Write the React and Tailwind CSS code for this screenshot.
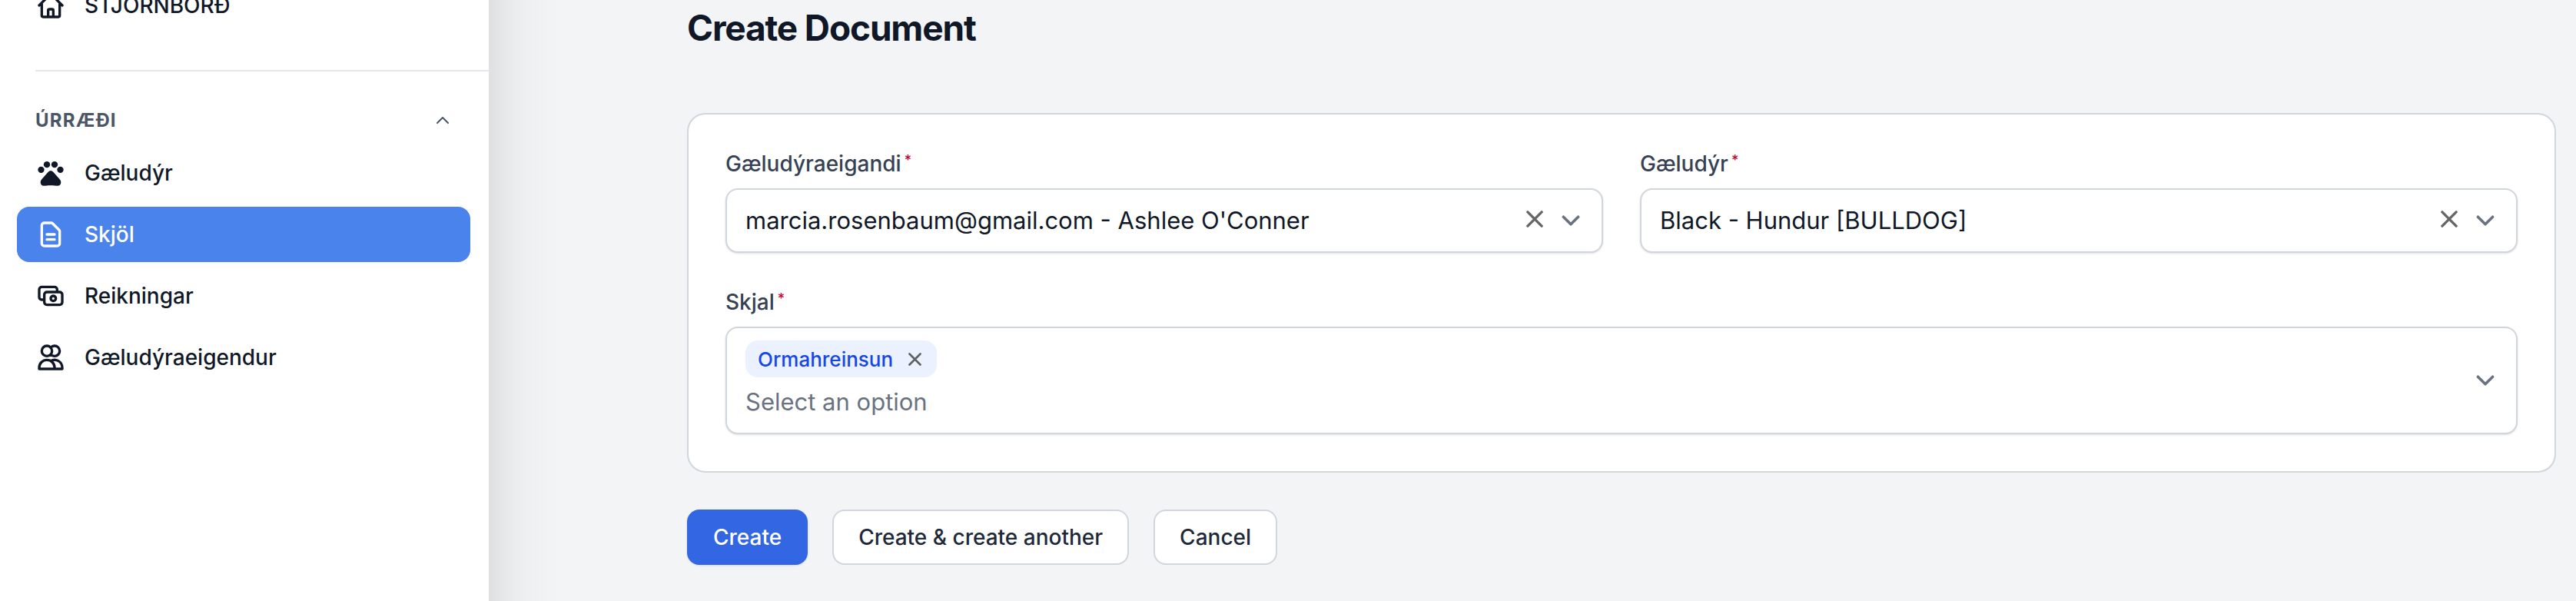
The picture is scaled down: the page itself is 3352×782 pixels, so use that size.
import { useState } from 'react'
import {
  HiOutlineHome,
  HiOutlineDocumentText,
  HiOutlineCash,
  HiOutlineUsers,
  HiOutlineChevronUp
} from 'react-icons/hi'

const PawIcon = ({ className }) => (
  <svg className={className} viewBox="0 0 24 24" fill="currentColor" aria-hidden="true">
    <circle cx="4.5" cy="9.5" r="2.5" />
    <circle cx="9" cy="5.5" r="2.5" />
    <circle cx="15" cy="5.5" r="2.5" />
    <circle cx="19.5" cy="9.5" r="2.5" />
    <path d="M12 10.4c-.9 0-1.5.4-2.1 1l-4.8 5.4C4.4 17.6 4 18.5 4 19.4 4 21 5 22.1 6.6 22.1c1.6 0 3.2-.4 5.4-.4s3.8.4 5.4.4c1.6 0 2.6-1.1 2.6-2.7 0-.9-.4-1.8-1.1-2.6l-4.8-5.4c-.6-.6-1.2-1-2.1-1z" />
  </svg>
)

const CrossIcon = ({ className }) => (
  <svg className={className} viewBox="0 0 22 22" fill="none" stroke="currentColor" strokeWidth="3.4" strokeLinecap="round" aria-hidden="true">
    <path d="M1.9 1.9l18.2 18.2M20.1 1.9L1.9 20.1" />
  </svg>
)

const ChevronIcon = () => (
  <svg className="size-12 shrink-0 text-gray-500" viewBox="0 0 20 20" fill="none" stroke="currentColor" aria-hidden="true">
    <path strokeLinecap="round" strokeLinejoin="round" strokeWidth="1.5" d="M6 8l4 4 4-4" />
  </svg>
)

const resources = [
  { id: 'pets', label: 'Gæludýr', icon: PawIcon },
  { id: 'documents', label: 'Skjöl', icon: HiOutlineDocumentText },
  { id: 'invoices', label: 'Reikningar', icon: HiOutlineCash },
  { id: 'owners', label: 'Gæludýraeigendur', icon: HiOutlineUsers }
]

const NavItem = ({ item, active, onClick }) => {
  const Icon = item.icon
  return (
    <a
      href={`#${item.id}`}
      onClick={onClick}
      className={`flex h-18 items-center gap-6 rounded-2xl px-6 text-[28px] font-medium ${
        active ? 'bg-[#4b83ed] text-white' : 'text-gray-900'
      }`}
    >
      <Icon className="size-10 shrink-0" />
      {item.label}
    </a>
  )
}

const FieldLabel = ({ htmlFor, children }) => (
  <label htmlFor={htmlFor} className="flex gap-1 text-[28px] leading-8 font-medium text-gray-700">
    {children}
    <span className="text-lg leading-6 text-rose-700">*</span>
  </label>
)

const SelectField = ({ id, label, option }) => {
  const [value, setValue] = useState(option)

  return (
    <div className="flex flex-col gap-4">
      <FieldLabel htmlFor={id}>{label}</FieldLabel>
      <div className="flex h-21 items-center rounded-2xl border-2 border-gray-300 bg-white pr-4 shadow-sm">
        <select
          id={id}
          value={value}
          onChange={(e) => setValue(e.target.value)}
          className="h-full min-w-0 flex-1 appearance-none bg-transparent pl-6 text-[31px] text-gray-900 outline-none"
        >
          <option value="">Select an option</option>
          <option value={option}>{option}</option>
        </select>
        <button type="button" aria-label="Clear" onClick={() => setValue('')} className="px-3 pb-1 text-[#666666]">
          <CrossIcon className="size-[22px]" />
        </button>
        <ChevronIcon />
      </div>
    </div>
  )
}

const TagsField = ({ id, label }) => {
  const [tags, setTags] = useState(['Ormahreinsun'])

  return (
    <div className="flex flex-col gap-4">
      <FieldLabel htmlFor={id}>{label}</FieldLabel>
      <div className="flex items-center rounded-2xl border-2 border-gray-300 bg-white py-4 pr-4 pl-6 shadow-sm">
        <div className="flex flex-1 flex-col items-start gap-3">
          {tags.map((tag) => (
            <div key={tag} className="flex h-12 items-center gap-5 rounded-2xl bg-[#ebf1fe] pr-5 pl-4 text-[26px] font-medium text-blue-700">
              {tag}
              <button
                type="button"
                aria-label={`Remove ${tag}`}
                onClick={() => setTags(tags.filter((t) => t !== tag))}
                className="text-[#5f6063]"
              >
                <CrossIcon className="size-[17px]" />
              </button>
            </div>
          ))}
          <input
            id={id}
            type="text"
            placeholder="Select an option"
            className="mb-1 h-10 w-full text-[31px] text-gray-900 outline-none placeholder:text-gray-500"
          />
        </div>
        <ChevronIcon />
      </div>
    </div>
  )
}

const App = () => {
  const [current, setCurrent] = useState('documents')
  const [groupOpen, setGroupOpen] = useState(true)

  return (
    <div className="flex min-h-screen overflow-hidden bg-gray-100 font-['Inter',sans-serif]">
      {/* Sidebar runs past the top and bottom so its shadow stays even */}
      <aside className="-my-48 w-[636px] shrink-0 bg-white pt-[163px] pr-6 pl-[22px] shadow-[0_50px_100px_-24px_rgba(0,0,0,0.25)]">
        <nav>
          <NavItem item={{ id: 'dashboard', label: 'STJÓRNBORÐ', icon: HiOutlineHome }} />
          <hr className="my-12 -mr-6 ml-6 border-t-2 border-gray-200" />
          <button
            type="button"
            onClick={() => setGroupOpen(!groupOpen)}
            className="mb-4 flex w-full items-center justify-between px-6 text-2xl font-bold tracking-wider text-gray-600 uppercase"
          >
            Úrræði
            <HiOutlineChevronUp className={`size-6 ${groupOpen ? '' : 'rotate-180'}`} />
          </button>
          {groupOpen && (
            <div className="flex flex-col gap-2">
              {resources.map((item) => (
                <NavItem
                  key={item.id}
                  item={item}
                  active={item.id === current}
                  onClick={() => setCurrent(item.id)}
                />
              ))}
            </div>
          )}
        </nav>
      </aside>

      <main className="min-w-0 flex-1 pt-1 pr-[26px] pl-[258px]">
        <h1 className="mb-[79px] text-[46px] leading-16 font-bold tracking-tight text-gray-900">Create Document</h1>

        <form className="flex flex-col gap-12" onSubmit={(e) => e.preventDefault()}>
          <div className="flex flex-col gap-12 rounded-3xl border-2 border-gray-300 bg-white p-12">
            <div className="grid grid-cols-2 gap-12">
              <SelectField id="owner" label="Gæludýraeigandi" option="marcia.rosenbaum@gmail.com - Ashlee O'Conner" />
              <SelectField id="pet" label="Gæludýr" option="Black - Hundur [BULLDOG]" />
            </div>
            <TagsField id="document" label="Skjal" />
          </div>

          {/* Form actions */}
          <div className="flex gap-8 text-[28px] font-medium">
            <button type="submit" className="h-18 rounded-2xl bg-[#3266e3] px-[34px] text-white shadow">
              Create
            </button>
            <button type="button" className="h-18 rounded-2xl border-2 border-gray-300 bg-white px-8 text-gray-800">
              Create &amp; create another
            </button>
            <button type="button" className="h-18 rounded-2xl border-2 border-gray-300 bg-white px-8 text-gray-800">
              Cancel
            </button>
          </div>
        </form>
      </main>
    </div>
  )
}

export default App
